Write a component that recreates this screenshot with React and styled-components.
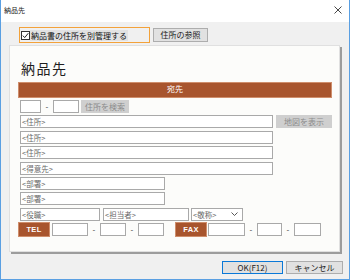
import React from "react";
import styled, { createGlobalStyle } from "styled-components";

const Global = createGlobalStyle`
  html, body { margin: 0; padding: 0; background: #ffffff; }
  * { box-sizing: border-box; }
  body { font-family: "Noto Sans CJK JP", "Noto Sans", sans-serif; }
`;

const FONT = `"Noto Sans CJK JP", "Noto Sans", sans-serif`;

const Window = styled.div`
  width: 350px;
  height: 280px;
  display: flex;
  flex-direction: column;
  border-left: 1px solid #5a9fe2;
  border-right: 1px solid #5a9fe2;
  border-bottom: 1px solid #5a9fe2;
  background: #f0f0f0;
  font-family: ${FONT};
`;

const TitleBar = styled.div`
  height: 22px;
  flex: none;
  background: #ffffff;
  display: flex;
  align-items: center;
  justify-content: space-between;
  padding: 0 7px 2px 3px;
`;

const TitleText = styled.span`
  font-size: 7px;
  line-height: 8px;
  color: #1a1a1a;
`;

const Body = styled.div`
  flex: 1;
  display: flex;
  flex-direction: column;
  padding: 5px 6px 0 8px;
`;

const TopRow = styled.div`
  display: flex;
  align-items: center;
  gap: 3px;
  margin-left: 10px;
  height: 16px;
`;

const CheckGroup = styled.label`
  width: 131px;
  height: 16px;
  border: 1px solid #f3a23a;
  display: flex;
  align-items: center;
  padding-left: 1px;
`;

const CheckBox = styled.span`
  width: 9px;
  height: 9px;
  border: 1px solid #333;
  background: #fff;
  display: flex;
  align-items: center;
  justify-content: center;
  flex: none;
`;

const CheckLabel = styled.span`
  font-size: 8px;
  line-height: 11px;
  height: 11px;
  color: #111;
  background: #e2e2e2;
  padding: 0 1px 0 1px;
  white-space: nowrap;
`;

const Button = styled.div`
  width: ${(p) => p.$w}px;
  height: ${(p) => p.$h || 13}px;
  flex: none;
  display: flex;
  align-items: center;
  justify-content: center;
  font-size: 8px;
  line-height: 10px;
  white-space: nowrap;
  color: ${(p) => (p.$disabled ? "#8c8c8c" : "#1a1a1a")};
  background: ${(p) => (p.$disabled ? "#cfcfcf" : "#e1e1e1")};
  border: 1px solid
    ${(p) => (p.$disabled ? "#cfcfcf" : p.$primary ? "#0a78d7" : "#adadad")};
`;

const Panel = styled.div`
  width: 331px;
  height: 207px;
  margin-top: 2px;
  background: #fcfcfa;
  border: 1px solid #e0e0e0;
  box-shadow: 2px 2px 0 #9c9c9c;
  padding: 15px 7px 0 8px;
  display: flex;
  flex-direction: column;
`;

const PanelTitle = styled.div`
  font-size: 14px;
  line-height: 14px;
  letter-spacing: 1.5px;
  color: #1e1e1e;
  margin-left: 3px;
`;

const Header = styled.div`
  margin-top: 7px;
  height: 16px;
  background: #a8552e;
  border: 1px solid #cf8e6c;
  color: #ffffff;
  font-size: 8px;
  line-height: 12px;
  text-align: center;
`;

const Fields = styled.div`
  margin-top: 2px;
  display: flex;
  flex-direction: column;
  gap: 2.4px;
`;

const Row = styled.div`
  display: flex;
  align-items: center;
  gap: ${(p) => p.$gap || 0}px;
  margin-left: ${(p) => (p.$flush ? 0 : 2)}px;
  margin-top: ${(p) => p.$mt || 0}px;
`;

const Field = styled.div`
  width: ${(p) => p.$w}px;
  height: 13px;
  flex: none;
  background: #ffffff;
  border: 1px solid #a9a9a9;
  font-size: 7.5px;
  line-height: 11px;
  color: #6a6a6a;
  padding-left: 1px;
  display: flex;
  align-items: center;
  justify-content: space-between;
  white-space: nowrap;
  overflow: hidden;
`;

const Chevron = styled.svg`
  margin-right: 4px;
  flex: none;
`;

const Dash = styled.span`
  width: 12px;
  flex: none;
  text-align: center;
  font-size: 8px;
  line-height: 10px;
  color: #333;
`;

const Label = styled.div`
  width: 32px;
  height: 15px;
  flex: none;
  background: #a8552e;
  border: 1px solid #cf8e6c;
  color: #ffffff;
  font-family: "Liberation Sans", "DejaVu Sans", sans-serif;
  font-weight: bold;
  font-size: 7.5px;
  line-height: 13px;
  text-align: center;
  letter-spacing: 0.3px;
  margin-left: ${(p) => p.$ml || 0}px;
  margin-right: ${(p) => p.$mr || 0}px;
`;

const Footer = styled.div`
  margin-top: 9px;
  display: flex;
  justify-content: flex-end;
  gap: 3px;
`;

const Spacer = styled.div`
  width: ${(p) => p.$w}px;
  flex: none;
`;

function Select({ w, text }) {
  return (
    <Field $w={w}>
      {text}
      <Chevron width="7" height="4" viewBox="0 0 7 4">
        <polyline points="0.5,0.5 3.5,3.5 6.5,0.5" fill="none" stroke="#444" strokeWidth="0.9" />
      </Chevron>
    </Field>
  );
}

export default function App() {
  return (
    <>
      <Global />
      <Window>
        <TitleBar>
          <TitleText>納品先</TitleText>
          <svg width="8" height="8" viewBox="0 0 8 8">
            <path d="M0.5 0.5 L7.5 7.5 M7.5 0.5 L0.5 7.5" stroke="#333" strokeWidth="0.9" />
          </svg>
        </TitleBar>
        <Body>
          <TopRow>
            <CheckGroup>
              <CheckBox>
                <svg width="7" height="7" viewBox="0 0 7 7">
                  <polyline points="0.8,3.6 2.7,5.6 6.3,1.2" fill="none" stroke="#222" strokeWidth="1" />
                </svg>
              </CheckBox>
              <CheckLabel>納品書の住所を別管理する</CheckLabel>
            </CheckGroup>
            <Button $w={55} $h={14}>住所の参照</Button>
          </TopRow>
          <Panel>
            <PanelTitle>納品先</PanelTitle>
            <Header>宛先</Header>
            <Fields>
              <Row>
                <Field $w={21} />
                <Dash>-</Dash>
                <Field $w={26} />
                <Spacer $w={2} />
                <Button $w={48} $disabled>住所を検索</Button>
              </Row>
              <Row $gap={3}>
                <Field $w={253}>&lt;住所&gt;</Field>
                <Button $w={56} $disabled>地図を表示</Button>
              </Row>
              <Row>
                <Field $w={253}>&lt;住所&gt;</Field>
              </Row>
              <Row>
                <Field $w={253}>&lt;住所&gt;</Field>
              </Row>
              <Row>
                <Field $w={253}>&lt;得意先&gt;</Field>
              </Row>
              <Row>
                <Field $w={145}>&lt;部署&gt;</Field>
              </Row>
              <Row>
                <Field $w={145}>&lt;部署&gt;</Field>
              </Row>
              <Row>
                <Field $w={80}>&lt;役職&gt;</Field>
                <Spacer $w={3} />
                <Field $w={86}>&lt;担当者&gt;</Field>
                <Spacer $w={2} />
                <Select w={52} text="<敬称>" />
              </Row>
              <Row $flush $mt={-1}>
                <Label $mr={2}>TEL</Label>
                <Field $w={36} />
                <Dash>-</Dash>
                <Field $w={26} />
                <Dash>-</Dash>
                <Field $w={26} />
                <Label $ml={11} $mr={1}>FAX</Label>
                <Field $w={37} />
                <Dash>-</Dash>
                <Field $w={25} />
                <Dash>-</Dash>
                <Field $w={27} />
              </Row>
            </Fields>
          </Panel>
          <Footer>
            <Button $w={61} $primary>OK(F12)</Button>
            <Button $w={57}>キャンセル</Button>
          </Footer>
        </Body>
      </Window>
    </>
  );
}
